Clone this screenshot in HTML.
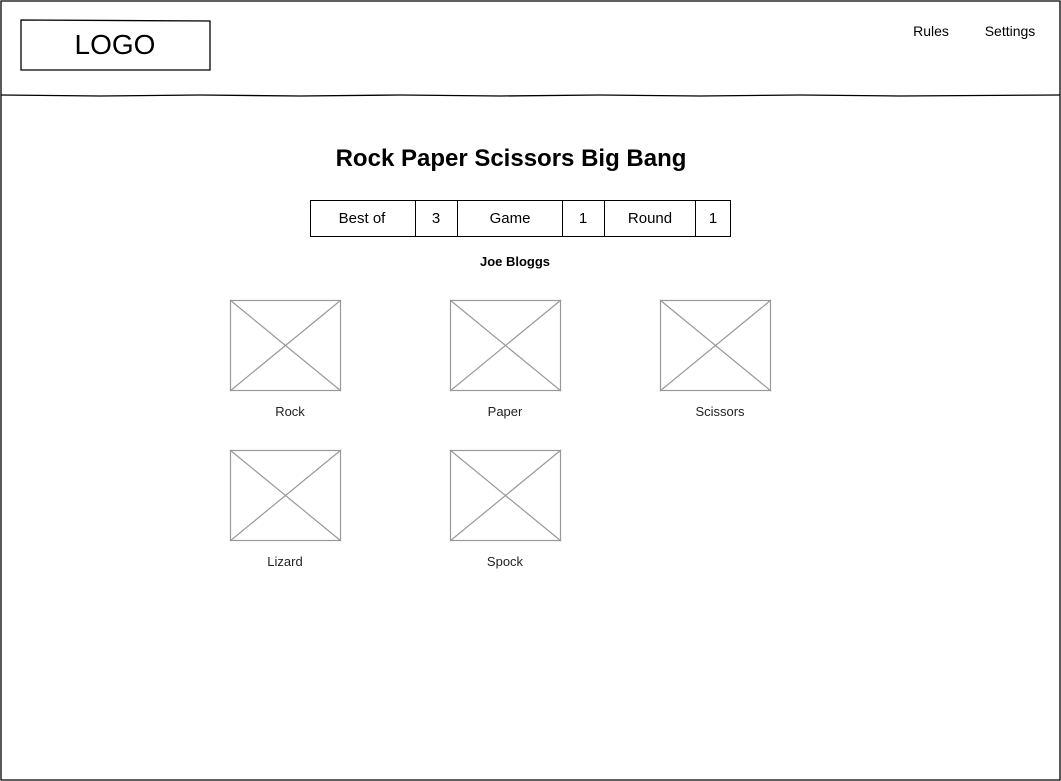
<!DOCTYPE html>
<html><head><meta charset="utf-8"><style>
body{margin:0;width:1061px;height:781px;background:#fff;position:relative;overflow:hidden;font-family:"Liberation Sans",Arial,sans-serif;color:#000}
.t{position:absolute;white-space:nowrap;transform:translateX(-50%)}
</style></head><body>
<svg width="1061" height="781" style="position:absolute;left:0;top:0">
<g fill="none" stroke="#000" stroke-width="1.3">
<path d="M1 1 L1060 1 L1060 780 L1 780 Z"/>
<path d="M1 95 L100 96 L200 95 L300 96 L400 95 L500 96 L600 95 L700 96 L800 95 L900 96 L1060 95"/>
<path d="M21 20 L210 21 L210 70 L21 70 Z"/>
</g>
<g fill="none" stroke="#000" stroke-width="1">
<rect x="310.5" y="200.5" width="420" height="36"/>
<path d="M415.5 200V237M457.5 200V237M562.5 200V237M604.5 200V237M695.5 200V237"/>
</g>
<g fill="none" stroke="#999" stroke-width="1.2">
<rect x="230.5" y="300.5" width="110" height="90"/><path d="M230 300L341 391M341 300L230 391"/>
<rect x="450.5" y="300.5" width="110" height="90"/><path d="M450 300L561 391M561 300L450 391"/>
<rect x="660.5" y="300.5" width="110" height="90"/><path d="M660 300L771 391M771 300L660 391"/>
<rect x="230.5" y="450.5" width="110" height="90"/><path d="M230 450L341 541M341 450L230 541"/>
<rect x="450.5" y="450.5" width="110" height="90"/><path d="M450 450L561 541M561 450L450 541"/>
</g>
</svg>
<div class="t" style="left:115px;top:29px;font-size:28px">LOGO</div>
<div class="t" style="left:931px;top:23px;font-size:14px">Rules</div>
<div class="t" style="left:1010px;top:23px;font-size:14px">Settings</div>
<div class="t" style="left:511px;top:145px;font-size:24px;font-weight:bold">Rock Paper Scissors Big Bang</div>
<div class="t" style="left:362px;top:210px;font-size:15px">Best of</div>
<div class="t" style="left:436px;top:210px;font-size:15px">3</div>
<div class="t" style="left:510px;top:210px;font-size:15px">Game</div>
<div class="t" style="left:583px;top:210px;font-size:15px">1</div>
<div class="t" style="left:650px;top:210px;font-size:15px">Round</div>
<div class="t" style="left:713px;top:210px;font-size:15px">1</div>
<div class="t" style="left:515px;top:254px;font-size:13px;font-weight:bold">Joe Bloggs</div>
<div class="t" style="left:290px;top:404px;font-size:13px;color:#222">Rock</div>
<div class="t" style="left:505px;top:404px;font-size:13px;color:#222">Paper</div>
<div class="t" style="left:720px;top:404px;font-size:13px;color:#222">Scissors</div>
<div class="t" style="left:285px;top:554px;font-size:13px;color:#222">Lizard</div>
<div class="t" style="left:505px;top:554px;font-size:13px;color:#222">Spock</div>
</body></html>
